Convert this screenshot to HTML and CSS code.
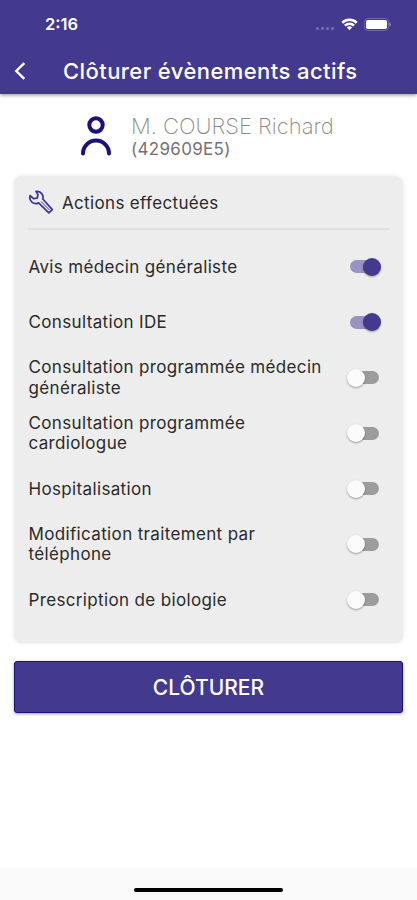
FILE: index.html
```html
<!DOCTYPE html>
<html lang="fr">
<head>
<meta charset="utf-8">
<title>Clôturer évènements actifs</title>
<link rel="stylesheet" href="styles.css">
</head>
<body>
<header class="header">
  <div class="status">
    <span class="time">2:16</span>
    <span class="dots"><i></i><i></i><i></i><i></i></span>
    <svg class="wifi" width="17" height="13" viewBox="0 0 18 13" fill="none" stroke="#fff" stroke-width="2.6">
      <path d="M1.3 4.7a11 11 0 0 1 15.4 0"/>
      <path d="M4.1 7.7a7 7 0 0 1 9.8 0"/>
      <path d="M9 12.5L6.2 9.7a4 4 0 0 1 5.6 0z" fill="#fff" stroke="none"/>
    </svg>
    <svg class="battery" width="27" height="13" viewBox="0 0 27 13">
      <rect x=".5" y=".5" width="24" height="12" rx="3.5" fill="none" stroke="#7068b0"/>
      <rect x="2" y="2" width="21" height="9" rx="1.8" fill="#fff"/>
      <path d="M25.3 4.5q1.5 .6 1.5 2t-1.5 2z" fill="#9c97cb"/>
    </svg>
  </div>
  <div class="bar">
    <svg class="back" width="12" height="18" viewBox="0 0 12 18" fill="none" stroke="#fff" stroke-width="2.4"><path d="M10.3 1.2L2.3 9l8 7.8"/></svg>
    <h1>Clôturer évènements actifs</h1>
  </div>
</header>
<main>
  <section class="patient">
    <svg width="32" height="40" viewBox="0 0 32 40" fill="none" stroke="#1c0f7e" stroke-width="4" stroke-linecap="round">
      <circle cx="16" cy="9" r="6.7"/>
      <path d="M3 37.5a13 13 0 0 1 26 0"/>
    </svg>
    <div class="identity">
      <div class="name">M. COURSE Richard</div>
      <div class="code">(429609E5)</div>
    </div>
  </section>
  <section class="card">
    <div class="card-head">
      <svg width="26" height="26" viewBox="0 0 26 26" fill="none" stroke="#40369a" stroke-width="1.8" stroke-linejoin="round">
        <path d="M8 2.4a6 6 0 0 1 6.8 7.6L24.3 20.6l-3.5 3.2L10.6 13.9A6 6 0 0 1 2.2 6.6l3.4 3.1 3.7-.6 .6-3.6z"/>
        <path d="M13 12.5l8.3 8.3" stroke-width="1"/>
      </svg>
      <h2>Actions effectuées</h2>
    </div>
    <ul>
      <li><span>Avis médecin généraliste</span><b class="switch on"></b></li>
      <li><span>Consultation IDE</span><b class="switch on"></b></li>
      <li><span>Consultation programmée médecin généraliste</span><b class="switch"></b></li>
      <li><span>Consultation programmée cardiologue</span><b class="switch"></b></li>
      <li><span>Hospitalisation</span><b class="switch"></b></li>
      <li><span>Modification traitement par téléphone</span><b class="switch"></b></li>
      <li><span>Prescription de biologie</span><b class="switch"></b></li>
    </ul>
  </section>
  <button class="submit">CLÔTURER</button>
</main>
<footer><div class="home"></div></footer>
</body>
</html>
```
FILE: styles.css
```css
* { box-sizing: border-box; }
body {
  margin: 0;
  height: 900px;
  display: flex;
  flex-direction: column;
  background: #fff;
  color: #2a2a2a;
  font-family: Inter, "Liberation Sans", sans-serif;
}
.header {
  height: 94px;
  background: #43398e;
  color: #fff;
  box-shadow: 0 1px 4px rgba(0, 0, 0, .45);
}
.status {
  height: 48px;
  padding: 0 26px 0 45px;
  display: flex;
  align-items: center;
}
.time { font-size: 16.5px; font-weight: 600; }
.dots { display: flex; gap: 2px; margin: 8px 7px 0 auto; }
.dots i { width: 3px; height: 3px; border-radius: 50%; background: #786fb8; }
.battery { margin-left: 6px; }
.bar {
  height: 46px;
  display: flex;
  align-items: center;
  padding-left: 14px;
}
h1 {
  margin: 0 0 0 37px;
  font-size: 22px;
  font-weight: 500;
  letter-spacing: .42px;
  white-space: nowrap;
}
main { flex: 1; padding: 0 14px; }
.patient {
  height: 82px;
  padding: 21px 0 0 66px;
  display: flex;
  gap: 19px;
}
.patient svg { margin-top: 1px; }
.identity { white-space: nowrap; }
.name {
  font-size: 22px;
  line-height: 22px;
  font-weight: 200;
  color: #888;
}
.code {
  margin-top: 2px;
  font-size: 17px;
  line-height: 20px;
  letter-spacing: .3px;
  color: #737373;
}
.card {
  height: 467px;
  padding: 0 14px;
  border-radius: 8px;
  background: #ededed;
  box-shadow: 0 0 4px rgba(0, 0, 0, .1);
}
.card-head {
  height: 54px;
  display: flex;
  align-items: center;
  gap: 8px;
  border-bottom: 2px solid #dfdfdf;
}
h2 {
  margin: 2px 0 0;
  font-size: 17px;
  font-weight: 400;
  letter-spacing: .34px;
}
ul { list-style: none; margin: 0; padding: 9px 0 0; }
li {
  height: 55.5px;
  display: flex;
  align-items: center;
  justify-content: space-between;
  font-size: 17px;
  line-height: 20.5px;
  letter-spacing: .35px;
}
li span { width: 300px; padding-left: .5px; }
.switch {
  width: 29px;
  height: 13px;
  margin-right: 10px;
  border-radius: 7px;
  background: #9c9c9c;
  display: flex;
  align-items: center;
}
.switch::before {
  content: "";
  flex: none;
  width: 18px;
  height: 18px;
  margin-left: -3px;
  border-radius: 50%;
  background: #fbfbfb;
  box-shadow: 0 1px 2px rgba(0, 0, 0, .35);
}
.switch.on { background: #9892c5; }
.switch.on::before { margin-left: 13px; background: #43398e; }
.submit {
  display: block;
  width: 100%;
  height: 52px;
  margin-top: 18px;
  padding: 0;
  border: 1px solid #1c0f7e;
  border-radius: 3px;
  background: #43398e;
  color: #fff;
  font: 500 21px Inter, "Liberation Sans", sans-serif;
  box-shadow: 0 1px 3px rgba(0, 0, 0, .4);
}
footer {
  height: 32px;
  padding-top: 20px;
  background: #fafafa;
}
.home {
  width: 149px;
  height: 4px;
  margin: 0 auto;
  border-radius: 2px;
  background: #000;
}
```
